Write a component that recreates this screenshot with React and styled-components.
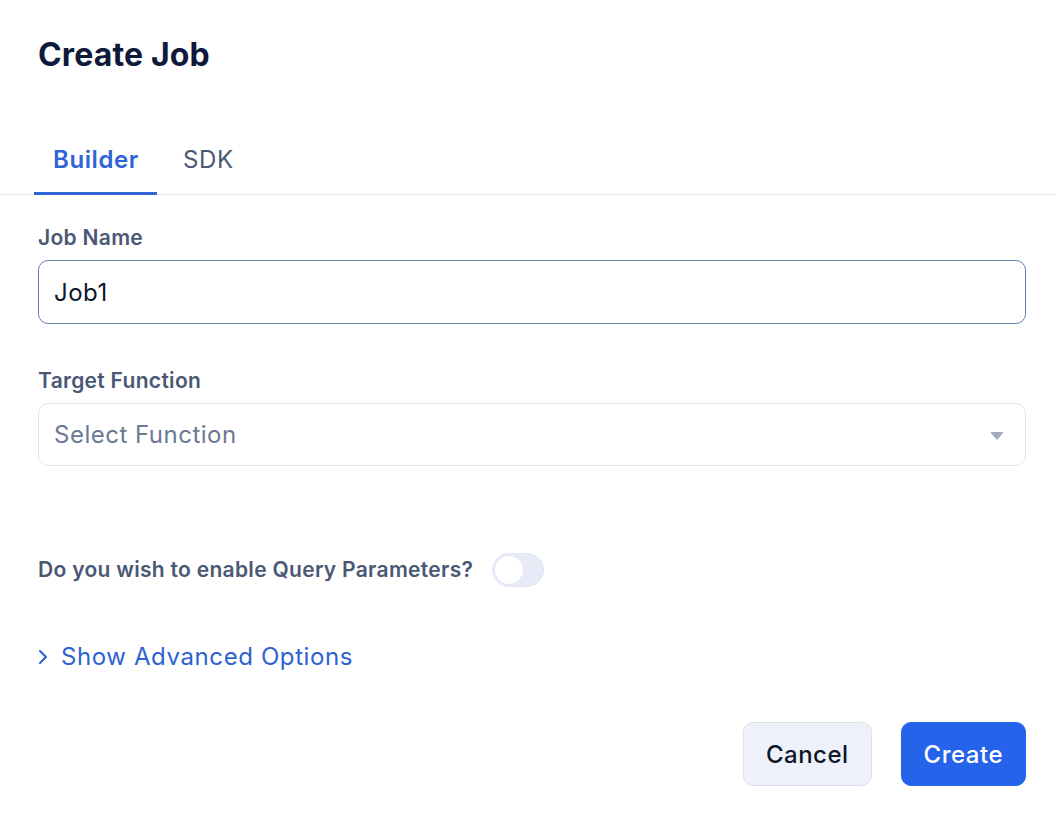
import React, { useState } from "react";
import styled, { createGlobalStyle } from "styled-components";

const GlobalStyle = createGlobalStyle`
  html, body {
    margin: 0;
    padding: 0;
    background: #ffffff;
  }
  body {
    font-family: Inter, "Noto Sans", "Liberation Sans", sans-serif;
    -webkit-font-smoothing: antialiased;
  }
  * { box-sizing: border-box; }
`;

const Page = styled.div`
  width: 1056px;
  min-height: 826px;
  background: #fff;
`;

const Header = styled.div`
  padding: 36px 30px 0 38px;
`;

const Title = styled.h1`
  margin: 0;
  font-size: 32px;
  line-height: 38px;
  font-weight: 700;
  color: #0f1a3a;
  letter-spacing: 0.15px;
`;

const TabBar = styled.div`
  display: flex;
  gap: 7px;
  margin-top: 71px;
  padding-left: 34px;
  border-bottom: 1px solid #e8eaee;
`;

const Tab = styled.button`
  background: none;
  border: none;
  margin: 0 0 -1px;
  padding: 0 18px 17px 19px;
  font-family: inherit;
  font-size: 24px;
  line-height: 30px;
  letter-spacing: 0.6px;
  font-weight: ${p => (p.$active ? 600 : 400)};
  color: ${p => (p.$active ? "#2f64d6" : "#4a5876")};
  border-bottom: 3px solid ${p => (p.$active ? "#2f64d6" : "transparent")};
  cursor: pointer;
`;

const Form = styled.div`
  padding: 31px 30px 0 38px;
  display: flex;
  flex-direction: column;
`;

const Field = styled.div`
  display: flex;
  flex-direction: column;
  gap: 10px;
  margin-bottom: ${p => p.$mb || 0}px;
`;

const Label = styled.label`
  font-size: 21px;
  line-height: 24px;
  letter-spacing: 0.3px;
  font-weight: 600;
  color: #4a5876;
`;

const TextInput = styled.input`
  height: 64px;
  width: 100%;
  padding: 0 15px;
  border: 1px solid #6080ac;
  border-radius: 10px;
  font-family: inherit;
  font-size: 24px;
  letter-spacing: 0.5px;
  color: #0f172a;
  outline: none;
  background: #fff;
`;

const SelectBox = styled.div`
  height: 63px;
  width: 100%;
  padding: 0 21px 0 15px;
  border: 1px solid #e1e4ea;
  border-radius: 10px;
  display: flex;
  align-items: center;
  justify-content: space-between;
  font-size: 24px;
  letter-spacing: 0.5px;
  color: #6b7994;
  cursor: pointer;
`;

const Caret = styled.span`
  width: 0;
  height: 0;
  border-left: 7px solid transparent;
  border-right: 7px solid transparent;
  border-top: 8px solid #a2aabd;
  border-radius: 2px;
  margin-top: 3px;
`;

const ToggleRow = styled.div`
  display: flex;
  align-items: center;
  gap: 19px;
  margin-bottom: 55px;
`;

const Track = styled.button`
  width: 52px;
  height: 34px;
  padding: 2px;
  border-radius: 17px;
  border: 1px solid #e4e9f7;
  background: ${p => (p.$on ? "#2563eb" : "#e7ebf8")};
  display: flex;
  align-items: center;
  justify-content: ${p => (p.$on ? "flex-end" : "flex-start")};
  cursor: pointer;
`;

const Knob = styled.span`
  width: 28px;
  height: 28px;
  border-radius: 50%;
  background: #fff;
  box-shadow: 0 0 0 1px #e3e7f3;
`;

const Advanced = styled.button`
  align-self: flex-start;
  display: flex;
  align-items: center;
  gap: 13px;
  background: none;
  border: none;
  padding: 0;
  font-family: inherit;
  font-size: 24px;
  line-height: 30px;
  letter-spacing: 0.6px;
  color: #2d62d0;
  cursor: pointer;
`;

const Footer = styled.div`
  display: flex;
  justify-content: flex-end;
  gap: 29px;
  margin-top: 50px;
`;

const Button = styled.button`
  height: 64px;
  padding: 0 22px;
  border-radius: 10px;
  font-family: inherit;
  font-size: 24px;
  letter-spacing: 0.5px;
  font-weight: 500;
  cursor: pointer;
  border: 1px solid ${p => (p.$primary ? "#2563eb" : "#dde2ec")};
  background: ${p => (p.$primary ? "#2563eb" : "#eef1fa")};
  color: ${p => (p.$primary ? "#ffffff" : "#0f172a")};
`;

export default function App() {
  const [tab, setTab] = useState("builder");
  const [name, setName] = useState("Job1");
  const [query, setQuery] = useState(false);

  return (
    <Page>
      <GlobalStyle />
      <Header>
        <Title>Create Job</Title>
      </Header>
      <TabBar>
        <Tab $active={tab === "builder"} onClick={() => setTab("builder")}>Builder</Tab>
        <Tab $active={tab === "sdk"} onClick={() => setTab("sdk")}>SDK</Tab>
      </TabBar>
      <Form>
        <Field $mb={45}>
          <Label>Job Name</Label>
          <TextInput value={name} onChange={e => setName(e.target.value)} />
        </Field>
        <Field $mb={87}>
          <Label>Target Function</Label>
          <SelectBox>
            <span>Select Function</span>
            <Caret />
          </SelectBox>
        </Field>
        <ToggleRow>
          <Label as="span">Do you wish to enable Query Parameters?</Label>
          <Track $on={query} onClick={() => setQuery(!query)}>
            <Knob />
          </Track>
        </ToggleRow>
        <Advanced>
          <svg width="10" height="16" viewBox="0 0 10 16" fill="none">
            <path d="M2 2l6 6-6 6" stroke="#2d62d0" strokeWidth="2" strokeLinecap="round" strokeLinejoin="round" />
          </svg>
          Show Advanced Options
        </Advanced>
        <Footer>
          <Button>Cancel</Button>
          <Button $primary>Create</Button>
        </Footer>
      </Form>
    </Page>
  );
}
